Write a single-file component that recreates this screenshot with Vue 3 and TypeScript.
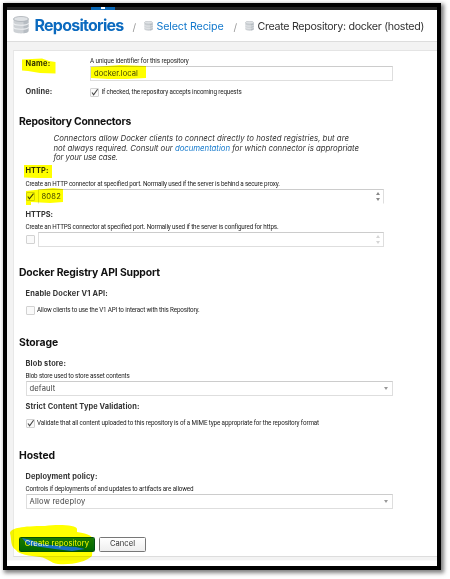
<script setup lang="ts">
import type { Directive } from 'vue'

// Tracks a line of text so that it spans the given width in pixels.
const vFit: Directive<HTMLElement, number> = {
  mounted(el, { value }) {
    const count = (el.textContent ?? '').trim().length
    const natural = el.getBoundingClientRect().width
    el.style.letterSpacing = `${(value - natural) / count}px`
  },
}
</script>

<template>
  <div class="stage">
    <div class="window">
      <div class="topbar"><span class="tab"><i></i></span></div>
      <header class="crumbs">
        <svg class="db big" viewBox="0 0 16 18">
          <path class="body" d="M.5 3v12c0 3.2 15 3.2 15 0V3z" />
          <path class="shade" d="M10.5 4h5v11c0 1.3-2 2-5 2.3z" />
          <path class="line" d="M.5 7c0 3 15 3 15 0M.5 11c0 3 15 3 15 0" />
          <ellipse class="lid" cx="8" cy="3" rx="7.5" ry="2.5" />
        </svg>
        <h1><span v-fit="89">Repositories</span></h1>
        <span class="slash first">/</span>
        <svg class="db small" viewBox="0 0 16 18">
          <path class="body" d="M.5 3v12c0 3.2 15 3.2 15 0V3z" />
          <path class="shade" d="M10.5 4h5v11c0 1.3-2 2-5 2.3z" />
          <path class="line" d="M.5 7c0 3 15 3 15 0M.5 11c0 3 15 3 15 0" />
          <ellipse class="lid" cx="8" cy="3" rx="7.5" ry="2.5" />
        </svg>
        <a class="crumb"><span v-fit="67">Select Recipe</span></a>
        <span class="slash second">/</span>
        <svg class="db small" viewBox="0 0 16 18">
          <path class="body" d="M.5 3v12c0 3.2 15 3.2 15 0V3z" />
          <path class="shade" d="M10.5 4h5v11c0 1.3-2 2-5 2.3z" />
          <path class="line" d="M.5 7c0 3 15 3 15 0M.5 11c0 3 15 3 15 0" />
          <ellipse class="lid" cx="8" cy="3" rx="7.5" ry="2.5" />
        </svg>
        <span class="crumb current"><span v-fit="166.5">Create Repository: docker (hosted)</span></span>
      </header>

      <main class="panel">
        <div class="pair name">
          <div class="label"><span v-fit="25">Name:</span></div>
          <div class="field">
            <div class="hint"><span v-fit="98.5">A unique identifier for this repository</span></div>
            <div class="input"><span v-fit="44">docker.local</span></div>
          </div>
        </div>
        <div class="pair online">
          <div class="label"><span v-fit="27">Online:</span></div>
          <div class="check">
            <span class="box"><svg viewBox="0 0 9 9"><path d="M2 4.5 3.6 6.8 7.6 1.2" /></svg></span>
            <span v-fit="140">If checked, the repository accepts incoming requests</span>
          </div>
        </div>

        <h2 class="connectors"><span v-fit="112">Repository Connectors</span></h2>
        <div class="intro">
          <p><span v-fit="295.5">Connectors allow Docker clients to connect directly to hosted registries, but are</span></p>
          <p><span v-fit="305.5">not always required. Consult our <a>documentation</a> for which connector is appropriate</span></p>
          <p><span v-fit="64.5">for your use case.</span></p>
        </div>
        <div class="label http"><span v-fit="23">HTTP:</span></div>
        <div class="hint port-hint first"><span v-fit="254">Create an HTTP connector at specified port. Normally used if the server is behind a secure proxy.</span></div>
        <div class="port">
          <span class="box"><svg viewBox="0 0 9 9"><path d="M1.8 4.5 3.4 6.8 7.5 1.6" /></svg></span>
          <div class="input open"><span v-fit="19.5">8082</span><span class="spin"><i></i><i></i></span></div>
        </div>
        <div class="label https"><span v-fit="27.5">HTTPS:</span></div>
        <div class="hint port-hint second"><span v-fit="252.5">Create an HTTPS connector at specified port. Normally used if the server is configured for https.</span></div>
        <div class="port">
          <span class="box"></span>
          <div class="input"><span></span><span class="spin off"><i></i><i></i></span></div>
        </div>

        <h2 class="api"><span v-fit="141">Docker Registry API Support</span></h2>
        <div class="label after-title"><span v-fit="82.5">Enable Docker V1 API:</span></div>
        <div class="check v1">
          <span class="box"></span>
          <span v-fit="162.5">Allow clients to use the V1 API to interact with this Repository.</span>
        </div>

        <h2 class="storage"><span v-fit="39">Storage</span></h2>
        <div class="label after-title"><span v-fit="40.5">Blob store:</span></div>
        <div class="hint select-hint"><span v-fit="104">Blob store used to store asset contents</span></div>
        <div class="input select"><span v-fit="26">default</span><i></i></div>
        <div class="label strict"><span v-fit="114">Strict Content Type Validation:</span></div>
        <div class="check mime">
          <span class="box"><svg viewBox="0 0 9 9"><path d="M2 4.5 3.6 6.8 7.6 1.2" /></svg></span>
          <span v-fit="282">Validate that all content uploaded to this repository is of a MIME type appropriate for the repository format</span>
        </div>

        <h2 class="hosted"><span v-fit="36">Hosted</span></h2>
        <div class="label after-title"><span v-fit="72">Deployment policy:</span></div>
        <div class="hint select-hint"><span v-fit="168">Controls if deployments of and updates to artifacts are allowed</span></div>
        <div class="input select"><span v-fit="56">Allow redeploy</span><i></i></div>

        <div class="actions">
          <button class="primary"><span v-fit="64.5">Create repository</span></button>
          <button><span v-fit="25">Cancel</span></button>
        </div>
      </main>
    </div>

    <svg class="marker" viewBox="0 0 450 579">
      <path d="M22 59.5 42 58.5 49 61 55.5 62V73.5L40 73 28 71 22 70.5z" />
      <path d="M91 67 107 66 120 65 146 66V78L126 79 108 79 91 78z" />
      <path d="M24 165H52V178H38L24 177.500z" />
      <path d="M26 191 44 189 53 188 63 189V202L50 203 31 202V205H26z" />
      <path d="M10 533C11 528 22 526 45 526 58 524 77 525 77 529V532C89 534 94 536 93 542L92 556C86 562 72 565 58 564 50 563 48 558 40 557 30 556 18 554 16 550 10 546 12 541 10 533z" />
    </svg>
    <svg class="pen" viewBox="0 0 450 579">
      <path d="M22 538 31 540 41 544 60 546 76 547 85 549 72 551 55 549 34 546 28 545z" />
    </svg>
  </div>
</template>

<style>
body {
  background: #fff;
  overflow: hidden;
}
</style>

<style scoped>
.stage {
  position: relative;
  width: 450px;
  height: 579px;
  box-sizing: border-box;
  padding: 3px;
  font-family: Inter, 'Liberation Sans', sans-serif;
  color: #333;
  isolation: isolate;
}
.stage span { white-space: nowrap; }
.window {
  box-sizing: border-box;
  width: 438px;
  height: 567px;
  border: 4px solid #000;
  background: #fff;
  box-shadow: 2px 2px 4px 1px rgba(0, 0, 0, 0.5);
  overflow: hidden;
}
.topbar { height: 3px; background: #222; padding-left: 84px; }
.tab { display: flex; justify-content: center; width: 24px; height: 3px; background: #0967b5; }
.tab i { width: 4px; height: 2px; background: #fff; }
.crumbs {
  display: flex;
  align-items: center;
  height: 31px;
  padding-left: 6px;
  border-bottom: 1px solid #ddd;
}
.db { flex: none; }
.db.big { width: 16px; height: 18px; margin-top: -1px; }
.db.small { width: 9px; height: 10px; margin-top: 0; }
.body { fill: #cdd1d5; }
.shade { fill: #b7bdc3; }
.line { fill: none; stroke: #eef0f2; stroke-width: 1.2; }
.lid { fill: #dfe2e5; stroke: #a9afb5; stroke-width: 0.8; }
h1 {
  width: 98px;
  margin: -2px 0 0 5.5px;
  font-size: 16px;
  line-height: 20px;
  font-weight: 700;
  color: #0b6abf;
}
h1 span, h2 span, .label span, .hint span, .intro span, .crumb span { display: inline-block; }
.slash { font-size: 10px; color: #999; padding-top: 3px; width: 11px; }
.slash.second { margin-left: 10px; }
.crumb { width: 67px; margin: 3px 0 0 4px; font-size: 10.7px; line-height: 16px; color: #1479cc; }
.crumb.current { width: 170px; color: #333; }
.panel {
  box-sizing: border-box;
  margin-top: 8px;
  margin-left: 6px;
  height: 506.5px;
  border-left: 1px solid #e8e8e8;
  border-top: 1px solid #e4e4e4;
  border-bottom: 1px solid #ddd;
  padding: 0 0 0 5px;
  box-shadow: 0 0 0 8px #f3f3f3;
  clip-path: inset(-8px 0 -4px -6px);
}
.label {
  height: 10px;
  margin-left: 6.5px;
  font-size: 7.4px;
  line-height: 10px;
  font-weight: 700;
  color: #333;
}
.hint {
  height: 9px;
  margin-left: 6.5px;
  font-family: Roboto, sans-serif;
  font-size: 6.3px;
  line-height: 9px;
  color: #222;
}
.pair { display: flex; }
.pair .label { width: 64.5px; }
.name { padding-top: 6px; }
.name .label { margin-top: 2px; }
.name .field { width: 303px; }
.name .hint { margin-left: 0; }
.online { margin-top: 6px; }
.online .check { margin-left: 0; }
.input {
  display: flex;
  align-items: center;
  box-sizing: border-box;
  height: 15px;
  border: 1px solid #dedede;
  border-top-color: #ccc;
  background: #fff;
  padding-left: 3px;
  font-size: 7.6px;
  line-height: 12px;
  color: #444;
}
.check {
  display: flex;
  align-items: center;
  gap: 2.5px;
  height: 10px;
  margin-left: 6.5px;
  font-family: Roboto, sans-serif;
  font-size: 6.3px;
  line-height: 10px;
  color: #222;
}
.box {
  flex: none;
  box-sizing: border-box;
  width: 9px;
  height: 9px;
  border: 1px solid #d2d2d2;
  border-radius: 1px;
  background: #fafafa;
}
.box svg { display: block; width: 9px; height: 9px; margin: -1px; overflow: visible; }
.box path { fill: none; stroke: #444; stroke-width: 1.1; }
h2 {
  height: 14px;
  margin: 0;
  font-size: 10.4px;
  line-height: 16px;
  font-weight: 700;
  color: #111;
}
.connectors { margin-top: 17px; }
.intro { margin: 6px 0 0 34.5px; font-size: 7.8px; font-style: italic; }
.intro p { margin: 0; height: 9.7px; line-height: 9.7px; }
.intro a { color: #1479cc; }
.http { margin-top: 3px; }
.port-hint { margin-top: 4px; }
.port-hint.second { margin-top: 3px; }
.port { display: flex; align-items: center; gap: 3px; margin-left: 6.5px; }
.port .input { width: 346px; justify-content: space-between; padding-right: 3px; }
.port .open { border-bottom-color: transparent; }
.spin { display: flex; flex-direction: column; gap: 3px; }
.spin i { border: 2.5px solid transparent; border-top: 0; border-bottom: 3px solid #888; }
.spin i + i { border-bottom: 0; border-top: 3px solid #888; }
.spin.off { opacity: 0.35; }
.https { margin-top: 6px; }
.api { margin-top: 18px; }
.after-title { margin-top: 10px; }
.v1 { margin-top: 6px; }
.storage { margin-top: 20px; }
.select-hint { margin-top: 3px; }
.select { width: 367.5px; margin-left: 6.5px; justify-content: space-between; padding-right: 4px; }
.select i { border: 2.5px solid transparent; border-top: 3px solid #999; border-bottom: 0; }
.strict { margin-top: 6px; }
.mime { margin-top: 6px; }
.hosted { margin-top: 20px; }
.actions { display: flex; gap: 4px; margin-top: 27.5px; }
button {
  box-sizing: border-box;
  display: flex;
  align-items: center;
  justify-content: center;
  width: 47px;
  height: 15px;
  padding: 0;
  border: 1px solid #777;
  border-radius: 1.5px;
  background: linear-gradient(#fff, #eee);
  font: 400 7.6px / 12px Inter, sans-serif;
  color: #333;
}
.primary { width: 76px; border-color: #064f10; background: linear-gradient(#1a7a13, #00650b); color: #fff; }
.marker, .pen { position: absolute; inset: 0; width: 450px; height: 579px; pointer-events: none; }
.marker { mix-blend-mode: multiply; fill: #ffff00; }
.pen { fill: #176fc1; mix-blend-mode: lighten; }
</style>
